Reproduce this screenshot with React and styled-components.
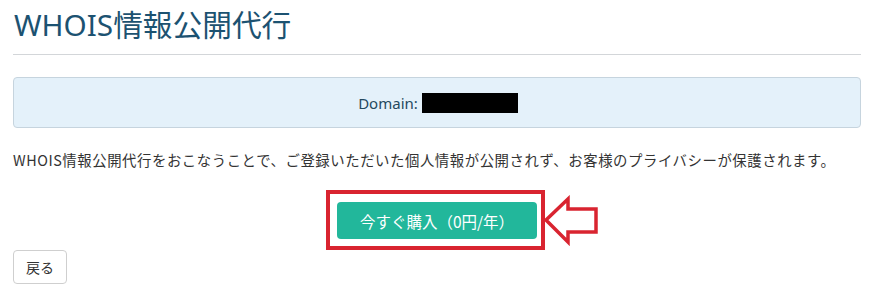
import React from "react";
import styled, { createGlobalStyle } from "styled-components";

const Global = createGlobalStyle`
  html, body { margin: 0; padding: 0; background: #fff; }
  body { font-family: "Noto Sans", "Noto Sans CJK JP", sans-serif; color: #333; }
`;

const Page = styled.div`
  padding: 0 10px 0 13px;
  display: flex;
  flex-direction: column;
`;

const Title = styled.h1`
  margin: 0;
  padding: 5px 0 9px 1px;
  font-size: 29.7px;
  line-height: 40px;
  font-weight: 400;
  color: #1c5271;
  border-bottom: 1px solid #d3d6d9;
  font-family: "Noto Sans", "Noto Sans CJK JP", sans-serif;
`;

const DomainBox = styled.div`
  margin-top: 22px;
  height: 51px;
  box-sizing: border-box;
  border: 1px solid #c6d4de;
  border-radius: 4px;
  background: #e4f1fa;
  display: flex;
  align-items: center;
  justify-content: center;
  gap: 4px;
  font-size: 15px;
  color: #24495e;
  padding-left: 2px;
`;

const Redacted = styled.span`
  display: inline-block;
  width: 96px;
  height: 20px;
  background: #000;
`;

const Lead = styled.p`
  margin: 22px 0 0;
  font-size: 14.4px;
  letter-spacing: 0.55px;
  line-height: 20px;
  color: #333;
  font-family: "Noto Sans CJK JP", sans-serif;
`;

const ActionRow = styled.div`
  margin-top: 20px;
  display: flex;
  justify-content: center;
  padding-right: 3px;
`;

const Highlight = styled.div`
  position: relative;
  border: 4px solid #d92430;
  padding: 8px 4px 7px 7px;
  display: flex;
`;

const BuyButton = styled.button`
  width: 200px;
  height: 37px;
  border: none;
  border-radius: 4px;
  background: #22b79b;
  color: #fff;
  font-size: 15.5px;
  font-family: "Noto Sans CJK JP", sans-serif;
  cursor: pointer;
  padding: 0;
`;

const Arrow = styled.svg`
  position: absolute;
  left: calc(100% + 1px);
  top: 1px;
`;

const BackButton = styled.button`
  align-self: flex-start;
  margin-top: 0;
  width: 54px;
  height: 34px;
  box-sizing: border-box;
  border: 1px solid #cfcfcf;
  border-radius: 4px;
  background: #fff;
  color: #333;
  font-size: 14px;
  font-family: "Noto Sans CJK JP", sans-serif;
`;

export default function App() {
  return (
    <>
      <Global />
      <Page>
        <Title>WHOIS情報公開代行</Title>
        <DomainBox>
          <span>Domain:</span>
          <Redacted />
        </DomainBox>
        <Lead>
          WHOIS情報公開代行をおこなうことで、ご登録いただいた個人情報が公開されず、お客様のプライバシーが保護されます。
        </Lead>
        <ActionRow>
          <Highlight>
            <BuyButton>今すぐ購入（0円/年）</BuyButton>
            <Arrow width="59" height="51" viewBox="0 0 59 51">
              <polygon
                points="4,25 26,4 26,14 54,14 54,37 26,37 26,47"
                fill="#fff"
                stroke="#d92430"
                strokeWidth="3.5"
                strokeLinejoin="miter"
              />
            </Arrow>
          </Highlight>
        </ActionRow>
        <BackButton>戻る</BackButton>
      </Page>
    </>
  );
}
